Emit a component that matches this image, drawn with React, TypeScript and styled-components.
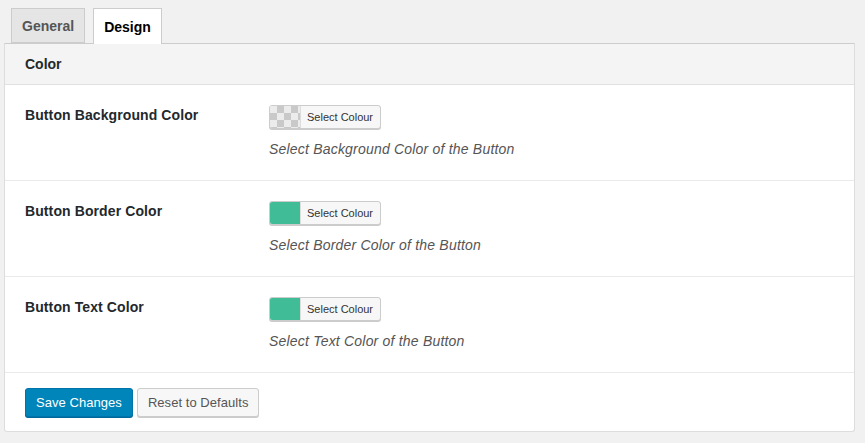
import styled, { createGlobalStyle } from 'styled-components';

const GlobalStyle = createGlobalStyle`
  html, body {
    margin: 0;
    padding: 0;
    background: #f1f1f1;
  }
  body {
    font-family: "Liberation Sans", Arial, sans-serif;
    color: #23282d;
  }
`;

const Page = styled.div`
  width: 865px;
  height: 443px;
  padding: 8px 12px 0 4px;
  box-sizing: border-box;
`;

const Tabs = styled.nav`
  display: flex;
  gap: 8px;
  padding-left: 7px;
  height: 36px;
  position: relative;
  z-index: 1;
`;

const Tab = styled.a<{ $active?: boolean }>`
  display: flex;
  align-items: center;
  padding: 0 10px;
  height: ${({ $active }) => ($active ? '36px' : '35px')};
  box-sizing: border-box;
  border: 1px solid #ccc;
  border-bottom: ${({ $active }) => ($active ? 'none' : '1px solid #ccc')};
  background: ${({ $active }) => ($active ? '#fff' : '#e5e5e5')};
  color: ${({ $active }) => ($active ? '#000' : '#555')};
  font-size: 14px;
  font-weight: 700;
  text-decoration: none;
`;

const Panel = styled.section`
  width: 849px;
  background: #fff;
  border: 1px solid #ddd;
  border-top-color: #ccc;
  border-radius: 0 0 3px 3px;
  margin-top: -1px;
`;

const SectionHeader = styled.h2`
  margin: 0;
  height: 40px;
  display: flex;
  align-items: center;
  padding-left: 20px;
  background: #f4f4f4;
  border-bottom: 1px solid #e1e1e1;
  font-size: 14px;
  font-weight: 700;
  color: #23282d;
`;

const Row = styled.div`
  display: grid;
  grid-template-columns: 244px 1fr;
  height: 96px;
  box-sizing: border-box;
  padding: 20px 20px 0;
  border-bottom: 1px solid #eaeaea;
`;

const Label = styled.div`
  font-size: 14px;
  font-weight: 700;
  line-height: 20px;
  letter-spacing: 0.1px;
  color: #23282d;
`;

const Field = styled.div`
  display: flex;
  flex-direction: column;
  align-items: flex-start;
  gap: 12px;
`;

const PickerButton = styled.button`
  display: flex;
  align-items: stretch;
  height: 24px;
  padding: 0;
  border: 1px solid #ccc;
  border-radius: 3px;
  background: #f7f7f7;
  box-shadow: 0 1px 0 #ccc;
  overflow: hidden;
  font-family: inherit;
  cursor: pointer;
`;

const Swatch = styled.span<{ $color?: string }>`
  width: 30px;
  border-right: 1px solid #ddd;
  background: ${({ $color }) =>
    $color ??
    'repeating-conic-gradient(#c9c9c9 0% 25%, #ececec 0% 50%) 0 0 / 14px 14px'};
`;

const PickerText = styled.span`
  display: flex;
  align-items: center;
  padding: 0 7px 0 6px;
  font-size: 11px;
  color: #333;
`;

const Description = styled.p`
  margin: 0;
  font-size: 14px;
  font-style: italic;
  letter-spacing: 0.2px;
  color: #555;
`;

const Footer = styled.div`
  display: flex;
  gap: 4px;
  padding: 15px 20px 14px;
`;

const Button = styled.button<{ $primary?: boolean }>`
  height: 29px;
  padding: 0 10px;
  border-radius: 3px;
  font-family: inherit;
  font-size: 13px;
  letter-spacing: 0.05px;
  cursor: pointer;
  border: 1px solid ${({ $primary }) => ($primary ? '#0073aa' : '#ccc')};
  background: ${({ $primary }) => ($primary ? '#0085ba' : '#f7f7f7')};
  color: ${({ $primary }) => ($primary ? '#fff' : '#555')};
  box-shadow: 0 1px 0 ${({ $primary }) => ($primary ? '#006799' : '#ccc')};
`;

const fields = [
  { label: 'Button Background Color', desc: 'Select Background Color of the Button' },
  { label: 'Button Border Color', desc: 'Select Border Color of the Button', color: '#40bd96' },
  { label: 'Button Text Color', desc: 'Select Text Color of the Button', color: '#40bd96' },
];

export default function App() {
  return (
    <>
      <GlobalStyle />
      <Page>
        <Tabs>
          <Tab href="#">General</Tab>
          <Tab href="#" $active>Design</Tab>
        </Tabs>
        <Panel>
          <SectionHeader>Color</SectionHeader>
          {fields.map((f) => (
            <Row key={f.label}>
              <Label>{f.label}</Label>
              <Field>
                <PickerButton type="button">
                  <Swatch $color={f.color} />
                  <PickerText>Select Colour</PickerText>
                </PickerButton>
                <Description>{f.desc}</Description>
              </Field>
            </Row>
          ))}
          <Footer>
            <Button $primary>Save Changes</Button>
            <Button>Reset to Defaults</Button>
          </Footer>
        </Panel>
      </Page>
    </>
  );
}
